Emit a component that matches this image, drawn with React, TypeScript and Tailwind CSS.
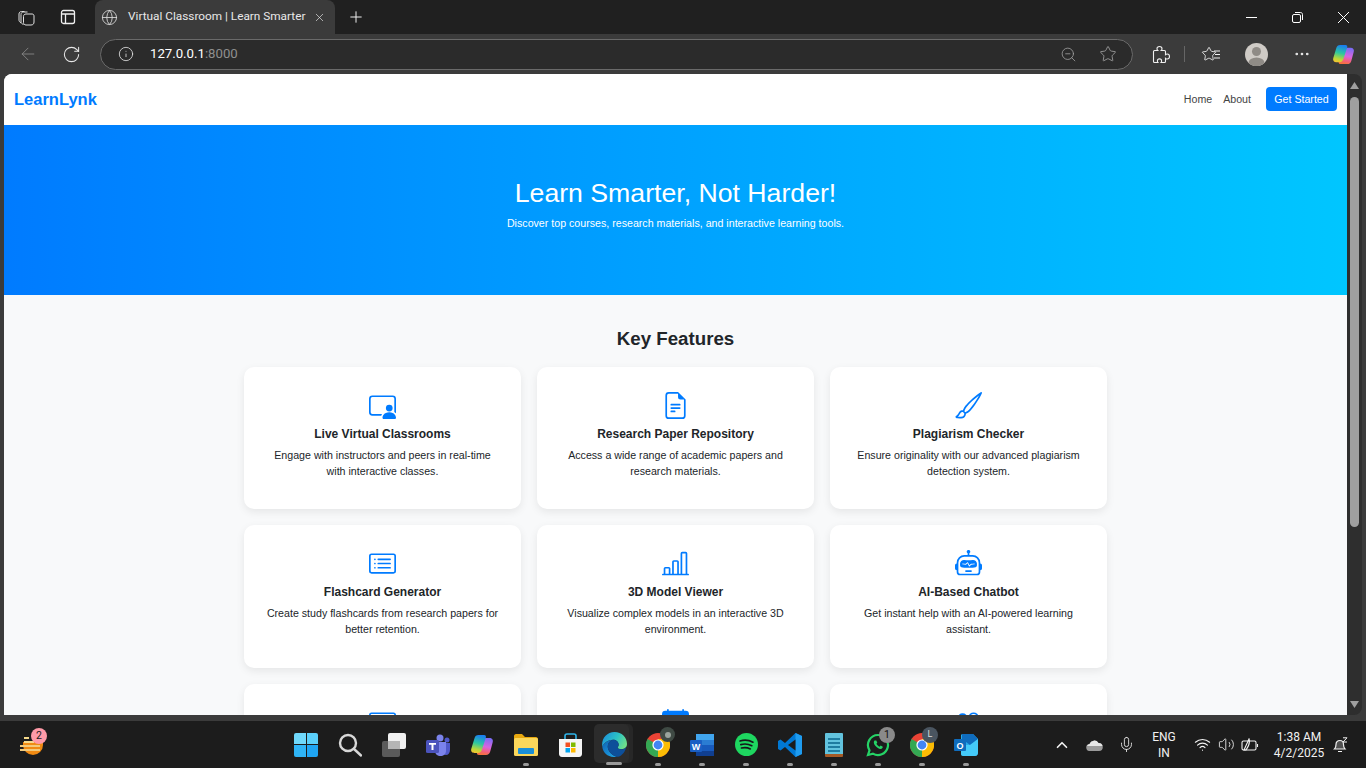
import type { ReactNode } from 'react';
import {
  BsPersonVideo3,
  BsFileEarmarkText,
  BsBrush,
  BsCardList,
  BsBarChartLine,
  BsRobot,
  BsCardText,
  BsCalendarEventFill,
  BsPeople,
} from 'react-icons/bs';
import {
  ArrowLeft,
  RotateCw,
  Info,
  ZoomOut,
  Star,
  MoreHorizontal,
  Plus,
  X,
  Globe,
  ChevronUp,
  Mic,
  Wifi,
  Volume2,
} from 'lucide-react';

const FONT = "font-['Liberation_Sans',Arial,sans-serif]";

const features = [
  { icon: BsPersonVideo3, title: 'Live Virtual Classrooms', text: 'Engage with instructors and peers in real-time with interactive classes.' },
  { icon: BsFileEarmarkText, title: 'Research Paper Repository', text: 'Access a wide range of academic papers and research materials.' },
  { icon: BsBrush, title: 'Plagiarism Checker', text: 'Ensure originality with our advanced plagiarism detection system.' },
  { icon: BsCardList, title: 'Flashcard Generator', text: 'Create study flashcards from research papers for better retention.' },
  { icon: BsBarChartLine, title: '3D Model Viewer', text: 'Visualize complex models in an interactive 3D environment.' },
  { icon: BsRobot, title: 'AI-Based Chatbot', text: 'Get instant help with an AI-powered learning assistant.' },
  { icon: BsCardText, title: '', text: '' },
  { icon: BsCalendarEventFill, title: '', text: '' },
  { icon: BsPeople, title: '', text: '' },
];

function CopilotLogo({ size = 24, id }: { size?: number; id: string }) {
  return (
    <svg width={size} height={size} viewBox="0 0 24 24">
      <defs>
        <linearGradient id={`${id}A`} x1="0.5" y1="0" x2="0.3" y2="1">
          <stop offset="0" stopColor="#1a7ff0" />
          <stop offset="0.45" stopColor="#2cc7a0" />
          <stop offset="0.8" stopColor="#b8d83a" />
          <stop offset="1" stopColor="#f7c52e" />
        </linearGradient>
        <linearGradient id={`${id}B`} x1="0.6" y1="0" x2="0.4" y2="1">
          <stop offset="0" stopColor="#7b6cf5" />
          <stop offset="0.5" stopColor="#d765e0" />
          <stop offset="0.8" stopColor="#f4607a" />
          <stop offset="1" stopColor="#f5733a" />
        </linearGradient>
      </defs>
      <path d="M15 5h4.500c2.500 0 3.900 1.800 3.200 4.200l-2.500 9.300c-.6 2.200-2 3.500-4.200 3.500H9c-1.800 0-2.400-1.200-1.900-2.700L11.300 8c.6-2 1.800-3 3.700-3z" fill={`url(#${id}B)`} />
      <path d="M8.500 2H14c1.700 0 2.300 1.200 1.800 2.800L12 16.500c-.7 2.300-2 3.500-4 3.500H4.500C2 20 .6 18.200 1.300 15.800L4.500 5.200C5.100 3.100 6.400 2 8.500 2z" fill={`url(#${id}A)`} />
    </svg>
  );
}

function ChromeLogo() {
  return (
    <svg width="24" height="24" viewBox="0 0 24 24">
      <circle cx="12" cy="12" r="12" fill="#ea4335" />
      <path d="M12 12 1.600 6A12 12 0 0 0 12 24l5.200-9z" fill="#34a853" />
      <path d="M12 12 12 24A12 12 0 0 0 22.400 6H12z" fill="#fbbc04" />
      <circle cx="12" cy="12" r="5.600" fill="#fff" />
      <circle cx="12" cy="12" r="4.400" fill="#4285f4" />
    </svg>
  );
}

function EdgeLogo() {
  return (
    <svg width="25" height="25" viewBox="0 0 24 24">
      <defs>
        <linearGradient id="edA" x1="0" y1="0.2" x2="1" y2="0.6">
          <stop offset="0" stopColor="#1c8fdc" />
          <stop offset="0.55" stopColor="#2bc3c4" />
          <stop offset="1" stopColor="#6fe08a" />
        </linearGradient>
        <linearGradient id="edB" x1="0" y1="0" x2="0.7" y2="1">
          <stop offset="0" stopColor="#0f5fb0" />
          <stop offset="1" stopColor="#1b9de2" />
        </linearGradient>
      </defs>
      <path d="M12 0c7 0 12 5 12 11.500 0 3-2.200 5-5.500 5-2 0-3.500-.6-3.500-1.600 0-.7 1-1 1-2.700C16 9.500 13.500 7.500 10.500 7.500 6 7.500 2 10.500.2 14 -.8 6.500 4.500 0 12 0z" fill="url(#edA)" />
      <path d="M.2 14C2 10.500 6 7.500 10.500 7.500c-3 1-5 3.500-5 6.500 0 4 3.300 8 8.500 9.800C7 25 1 21 .2 14z" fill="url(#edB)" />
      <path d="M10.500 7.500c3 0 5.500 2 5.500 4.700 0 1.700-1 2-1 2.700 0 1 1.500 1.600 3.500 1.600 2.100 0 3.800-.8 4.800-2.200C22 20 18 24 14 23.800 8.800 22 5.500 18 5.500 14c0-3 2-5.500 5-6.500z" fill="#0d4f9a" />
    </svg>
  );
}

function TaskIcon({ dot, children }: { dot?: boolean; children: ReactNode }) {
  return (
    <div className="relative flex h-[47px] w-[44px] shrink-0 items-center justify-center">
      {children}
      {dot && <span className="absolute bottom-[2px] left-1/2 h-[3px] w-[6px] -translate-x-1/2 rounded-full bg-[#9a9a9a]" />}
    </div>
  );
}

function BrowserChrome() {
  return (
    <>
      {/* tab strip */}
      <div className="flex h-[34px] shrink-0 items-center bg-[#202020] text-[#e8e8e8]">
        <div className="flex w-[95px] shrink-0 items-center pl-[18px]">
          <svg width="17" height="17" viewBox="0 0 17 17" fill="none" stroke="#e0e0e0" strokeWidth="1">
            <path d="M1 5c0-1.500 1-2.500 2.500-2.500h3M3 8V5.500C3 4 4 3 5.500 3h4M5.500 7.500C5.500 6 6.500 5 8 5h6c1.300 0 2 .8 2 2v6c0 1.800-1 3-3 3H8c-1.500 0-2.500-1-2.500-2.500z" />
            <path d="M1 5v6c0 1 .5 2 2 3M3 8v5c0 1 1 2 2.500 2.500" />
          </svg>
          <svg className="ml-[25px]" width="16" height="16" viewBox="0 0 16 16" fill="none" stroke="#f0f0f0" strokeWidth="1.300">
            <rect x="1.500" y="1.500" width="13" height="13" rx="2" />
            <path d="M1.500 5h13M5.500 5v9.500" />
          </svg>
        </div>
        <div className="flex h-[34px] w-[240px] shrink-0 items-center rounded-t-[8px] bg-[#3b3b3b] pl-[6px]">
          <Globe size={17} strokeWidth={1.200} className="shrink-0 text-[#dcdcdc]" />
          <span className="ml-[10px] flex-1 whitespace-nowrap font-['Roboto',sans-serif] text-[11.800px] text-[#e8e8e8]">
            Virtual Classroom | Learn Smarter
          </span>
          <X size={13} strokeWidth={1.300} className="mr-[9px] shrink-0 text-[#e0e0e0]" />
        </div>
        <Plus size={18} strokeWidth={1.300} className="ml-[12px] text-[#f4f4f4]" />
        <div className="ml-auto flex items-center text-white">
          <div className="flex w-[46px] justify-center">
            <svg width="11" height="11" viewBox="0 0 11 11" stroke="currentColor" strokeWidth="1" shapeRendering="crispEdges">
              <path d="M0 5.500h11" />
            </svg>
          </div>
          <div className="flex w-[46px] justify-center">
            <svg width="11" height="11" viewBox="0 0 11 11" fill="none" stroke="currentColor" strokeWidth="1">
              <rect x="0.500" y="2.500" width="8" height="8" rx="1.500" />
              <path d="M3 .5h5.500c1.200 0 2 .8 2 2V8" />
            </svg>
          </div>
          <div className="flex w-[46px] justify-center">
            <svg width="11" height="11" viewBox="0 0 11 11" stroke="currentColor" strokeWidth="1">
              <path d="m0 0 11 11M11 0 0 11" />
            </svg>
          </div>
        </div>
      </div>
      {/* toolbar */}
      <div className="flex h-[40px] shrink-0 items-center bg-[#3b3b3b] text-[#e8e8e8]">
        <ArrowLeft size={20} strokeWidth={1} className="ml-[18px] text-[#8c8c8c]" />
        <RotateCw size={19} strokeWidth={1.300} className="ml-[24px]" />
        <div className="ml-[19px] flex h-[31px] w-[1033px] items-center rounded-full border border-[#6a6a6a] bg-[#2b2b2b]">
          <Info size={16} strokeWidth={1.200} className="ml-[17px]" />
          <span className="ml-[16px] font-['Roboto',sans-serif] text-[13.200px]">
            <span className="text-white">127.0.0.1</span>
            <span className="text-[#8f8f8f]">:8000</span>
          </span>
          <ZoomOut size={17} strokeWidth={1.100} className="ml-auto text-[#a5a5a5]" />
          <Star size={18} strokeWidth={1.100} className="ml-[22px] mr-[15px] text-[#a5a5a5]" />
        </div>
        <svg className="ml-[18px]" width="19" height="19" viewBox="0 0 19 19" fill="none" stroke="#f0f0f0" strokeWidth="1.100">
          <path d="M3.500 5.500h3.200c-.5-.5-.7-1.200-.7-1.800C6 2.300 7.200 1.500 8.500 1.500S11 2.300 11 3.700c0 .6-.2 1.300-.7 1.800h3.200c.6 0 1 .4 1 1v3.200c.5-.5 1.200-.7 1.800-.7 1.400 0 2.200 1.200 2.200 2.500s-.8 2.500-2.200 2.500c-.6 0-1.300-.2-1.800-.7v3.200c0 .6-.4 1-1 1H10c.4-.5.6-1 .6-1.600 0-1.200-1-2-2.100-2s-2.100.8-2.100 2c0 .6.2 1.100.6 1.600H3.500c-.6 0-1-.4-1-1V6.500c0-.6.4-1 1-1z" />
        </svg>
        <span className="ml-[14px] h-[16px] w-px bg-[#666]" />
        <div className="relative ml-[16px] flex h-[18px] w-[18px] items-center">
          <Star size={16} strokeWidth={1.300} className="text-[#f0f0f0]" />
          <svg className="absolute left-[12px] top-[5px]" width="7" height="9" viewBox="0 0 7 9" stroke="#f0f0f0" strokeWidth="1">
            <path d="M1 1h6M2 4.500h5M1 8h6" />
          </svg>
        </div>
        <div className="ml-[26px] flex h-[23px] w-[23px] items-start justify-center overflow-hidden rounded-full bg-[#cfcbc6]">
          <svg width="23" height="23" viewBox="0 0 23 23">
            <circle cx="11.500" cy="8.500" r="4.500" fill="#8f8b86" />
            <ellipse cx="11.500" cy="20" rx="8" ry="5.500" fill="#8f8b86" />
          </svg>
        </div>
        <MoreHorizontal size={18} strokeWidth={1.600} className="ml-[25px]" />
        <div className="ml-[21px]">
          <CopilotLogo size={23} id="cpTop" />
        </div>
      </div>
    </>
  );
}

function Page() {
  return (
    <div className={`h-full overflow-hidden rounded-tl-[8px] bg-[#f8f9fa] ${FONT}`}>
      <nav className="flex h-[51px] items-center justify-between bg-white px-[10px] pb-[1px]">
        <span className="text-[16.500px] font-bold text-[#007bff]">LearnLynk</span>
        <div className="flex items-center text-[10.650px] text-[#444]">
          <span className="pt-px">Home</span>
          <span className="ml-[11px] pt-px">About</span>
          <span className="ml-[15px] flex h-[24px] w-[71px] items-center justify-center rounded-[4px] bg-[#007bff] pt-px text-white">
            Get Started
          </span>
        </div>
      </nav>
      <section className="flex h-[170px] flex-col items-center bg-gradient-to-r from-[#007bff] to-[#00c6ff] pt-[52px] text-white">
        <h1 className="text-[26.670px] leading-[32px]">Learn Smarter, Not Harder!</h1>
        <p className="mt-[6px] text-[10.650px] leading-[16px]">
          Discover top courses, research materials, and interactive learning tools.
        </p>
      </section>
      <section className="flex flex-col items-center pt-[32px]">
        <h2 className="text-[18.700px] font-bold leading-[24px] text-[#212529]">Key Features</h2>
        <div className="mt-[16px] grid w-[863px] grid-cols-3 grid-rows-[142px_143px_142px] gap-[16px]">
          {features.map(({ icon: Icon, title, text }, i) => (
            <div
              key={i}
              className="flex flex-col items-center rounded-[10px] bg-white px-[20px] pt-[25px] text-center shadow-[0_3px_8px_rgba(0,0,0,0.08)]"
            >
              <Icon size={27} className="shrink-0 text-[#007bff]" />
              <h3 className="mt-[7px] text-[12px] font-bold leading-[16px] text-[#212529]">{title}</h3>
              <p className="mt-[5px] text-[10.650px] leading-[16px] text-[#212529]">{text}</p>
            </div>
          ))}
        </div>
      </section>
    </div>
  );
}

function Scrollbar() {
  return (
    <div className="flex w-[15px] shrink-0 flex-col items-center rounded-r-[8px] bg-[#2e2e2e]">
      <svg className="mt-[8px]" width="9" height="7" viewBox="0 0 9 7">
        <path d="M4.500 0 9 7H0z" fill="#9f9f9f" />
      </svg>
      <div className="mt-[8px] h-[430px] w-[9px] rounded-full bg-[#9f9f9f]" />
      <svg className="mb-[7px] mt-auto" width="9" height="7" viewBox="0 0 9 7">
        <path d="M0 0h9L4.500 7z" fill="#9f9f9f" />
      </svg>
    </div>
  );
}

function Taskbar() {
  return (
    <div className="flex h-[47px] shrink-0 items-center bg-[#1c1c1c] font-['Roboto',sans-serif] text-[#f2f2f2]">
      {/* widgets */}
      <div className="relative ml-[20px] h-[47px] w-[30px] shrink-0">
        <div className="absolute left-[3px] top-[21px] h-[13px] w-[20px] rounded-b-full bg-[#f08a12]" />
        <div className="absolute left-[4px] top-[16px] h-[2px] w-[5px] bg-[#f5d98a]" />
        <div className="absolute left-[4px] top-[20px] h-[2px] w-[10px] bg-[#f5d98a]" />
        <div className="absolute left-0 top-[24px] h-[2px] w-[20px] bg-[#f2c97a]" />
        <div className="absolute left-0 top-[28px] h-[2px] w-[20px] bg-[#f2c97a]" />
        <span className="absolute left-[11px] top-[7px] flex h-[16px] w-[16px] items-center justify-center rounded-full bg-[#ff9aa8] text-[10.500px] text-[#222]">
          2
        </span>
      </div>
      {/* pinned apps */}
      <div className="ml-[234px] flex items-center">
        <TaskIcon>
          <div className="grid h-[24px] w-[24px] grid-cols-2 gap-[1px]">
            <span className="rounded-tl-[2px] bg-[#6fd8fb]" />
            <span className="rounded-tr-[2px] bg-[#5ad0fb]" />
            <span className="rounded-bl-[2px] bg-[#2fb4f6]" />
            <span className="rounded-br-[2px] bg-[#1fa5f3]" />
          </div>
        </TaskIcon>
        <TaskIcon>
          <svg width="24" height="24" viewBox="0 0 24 24" fill="none" stroke="#d8d8d8" strokeWidth="2.400">
            <circle cx="10" cy="10" r="8" />
            <path d="m16 16 7 6.500" strokeLinecap="round" />
          </svg>
        </TaskIcon>
        <TaskIcon>
          <div className="relative h-[24px] w-[24px]">
            <span className="absolute bottom-0 left-0 h-[16px] w-[18px] rounded-[2px] bg-[#5a5a5a]" />
            <span className="absolute right-0 top-0 h-[16px] w-[18px] rounded-[2px] bg-[#f0f0f0]" />
            <span className="absolute left-[6px] top-[8px] h-[8px] w-[12px] bg-[#b5b5b5]" />
          </div>
        </TaskIcon>
        <TaskIcon>
          <svg width="25" height="24" viewBox="0 0 25 24">
            <circle cx="14" cy="5" r="3.500" fill="#7b83eb" />
            <circle cx="21" cy="7" r="2.500" fill="#5059c9" />
            <path d="M16 10h8v7c0 3-2 5-4 5s-4-2-4-5z" fill="#5059c9" />
            <path d="M9 9h11v9c0 3-2.500 5-5.500 5S9 21 9 18z" fill="#7b83eb" />
            <rect x="0" y="7" width="13" height="13" rx="1.500" fill="#4b53bc" />
            <path d="M3 10h7v1.800H7.500V17h-2v-5.200H3z" fill="#fff" />
          </svg>
        </TaskIcon>
        <TaskIcon>
          <CopilotLogo id="cpBar" />
        </TaskIcon>
        <TaskIcon dot>
          <svg width="24" height="22" viewBox="0 0 24 22">
            <path d="M0 2c0-1 .8-2 2-2h6l3 3h11c1 0 2 1 2 2v2H0z" fill="#e8a80f" />
            <rect y="4" width="24" height="18" rx="1.500" fill="#fbd75b" />
            <rect x="4" y="14" width="16" height="6" rx="1" fill="#1a8fd8" />
          </svg>
        </TaskIcon>
        <TaskIcon>
          <svg width="23" height="24" viewBox="0 0 23 24">
            <path d="M6 6V3c0-1.500 1-2 2-2h7c1 0 2 .5 2 2v3" fill="none" stroke="#2fb4e9" strokeWidth="1.600" />
            <path d="M0 6h23v15c0 1.500-1 3-3 3H3c-2 0-3-1.500-3-3z" fill="#f5f5f5" />
            <rect x="6.500" y="9.500" width="4.500" height="4.500" fill="#f25022" />
            <rect x="12" y="9.500" width="4.500" height="4.500" fill="#7fba00" />
            <rect x="6.500" y="15" width="4.500" height="4.500" fill="#00a4ef" />
            <rect x="12" y="15" width="4.500" height="4.500" fill="#ffb900" />
          </svg>
        </TaskIcon>
        <TaskIcon>
          <span className="absolute left-[33px] top-[3px] h-[39px] w-[8px] rounded-r-[5px] bg-[#272727]" />
          <span className="absolute left-[2px] top-[3px] h-[39px] w-[35px] rounded-[5px] bg-[#2c2c2c]" />
          <div className="relative">
            <EdgeLogo />
          </div>
          <span className="absolute bottom-[3px] left-1/2 h-[3px] w-[16px] -translate-x-1/2 rounded-full bg-[#9a9a9a]" />
        </TaskIcon>
        <TaskIcon dot>
          <ChromeLogo />
          <span className="absolute right-[5px] top-[6px] flex h-[15px] w-[15px] items-center justify-center rounded-full bg-[#3f4a44]">
            <span className="h-[6px] w-[6px] rounded-full bg-[#9aa39c]" />
          </span>
        </TaskIcon>
        <TaskIcon dot>
          <svg width="24" height="22" viewBox="0 0 24 22">
            <rect x="6" y="0" width="18" height="22" rx="1.500" fill="#2b7cd3" />
            <rect x="6" y="0" width="18" height="6" fill="#41a5ee" />
            <rect x="6" y="11" width="18" height="6" fill="#185abd" />
            <rect x="6" y="17" width="18" height="5" fill="#103f91" />
            <rect x="0" y="6" width="12" height="12" rx="1" fill="#1a5fc4" />
            <text x="6" y="15.500" textAnchor="middle" fontSize="9" fontWeight="700" fill="#fff" fontFamily="Liberation Sans">W</text>
          </svg>
        </TaskIcon>
        <TaskIcon dot>
          <svg width="23" height="23" viewBox="0 0 23 23">
            <circle cx="11.500" cy="11.500" r="11.500" fill="#1ed760" />
            <path d="M5 8c4-1.200 9-.9 13 1.200M5.800 11.600c3.500-1 7.500-.7 11 1.100M6.500 15c3-.8 6-.6 8.800.9" fill="none" stroke="#16181a" strokeWidth="1.700" strokeLinecap="round" />
          </svg>
        </TaskIcon>
        <TaskIcon dot>
          <svg width="24" height="24" viewBox="0 0 24 24">
            <path d="M17.500 0 24 3v18l-6.500 3L7 14l-4.500 3.500L0 16v-8l2.500-1.500L7 10z" fill="#0078d4" />
            <path d="M17.500 0 24 3v18l-6.500 3z" fill="#1f9cf0" />
            <path d="M17.500 6.500 10 12l7.500 5.500z" fill="#1c1c1c" />
          </svg>
        </TaskIcon>
        <TaskIcon dot>
          <div className="flex h-[24px] w-[18px] flex-col gap-[2px] overflow-hidden rounded-[1px] border-b-[3px] border-[#a55a26] bg-[#62c3de] px-[3px] pt-[5px]">
            <span className="h-[2px] bg-[#1f7ca0]" />
            <span className="h-[2px] bg-[#1f7ca0]" />
            <span className="h-[2px] bg-[#1f7ca0]" />
            <span className="h-[2px] bg-[#1f7ca0]" />
          </div>
        </TaskIcon>
        <TaskIcon dot>
          <svg width="24" height="24" viewBox="0 0 24 24">
            <path d="M12 2a10 10 0 0 0-8.500 15.300L2 22l4.900-1.400A10 10 0 1 0 12 2z" fill="none" stroke="#25d366" strokeWidth="2.200" />
            <path d="M8.500 7.500c-1 1-1 3 .8 5.300 2 2.500 4.500 3.700 6.200 3 1-.4 1.300-1.300 1.300-2l-2.200-1.200-1 1.100c-1.200-.5-2.500-1.700-3.200-3l.9-1-1-2.300z" fill="#25d366" />
          </svg>
          <span className="absolute right-[5px] top-[6px] flex h-[16px] w-[16px] items-center justify-center rounded-full bg-[#8a8a8a] text-[10.500px] text-[#111]">
            1
          </span>
        </TaskIcon>
        <TaskIcon dot>
          <ChromeLogo />
          <span className="absolute right-[6px] top-[6px] flex h-[16px] w-[16px] items-center justify-center rounded-full bg-[#4a5560] text-[9px] text-[#ddd]">
            L
          </span>
        </TaskIcon>
        <TaskIcon dot>
          <svg width="24" height="22" viewBox="0 0 24 22">
            <path d="M8 0h11l5 5v14c0 1.500-1 3-3 3H9c-1 0-2-1-2-2V1z" fill="#28a8ea" />
            <path d="M8 0h11l5 5-8 6-8-6z" fill="#0f6cbd" />
            <path d="M7 11l9 0 8-6v14c0 1.500-1 3-3 3H9c-1 0-2-1-2-2z" fill="#50d9ff" opacity="0.7" />
            <rect x="0" y="5" width="12" height="12" rx="1" fill="#0f6cbd" />
            <text x="6" y="14.500" textAnchor="middle" fontSize="9" fontWeight="700" fill="#fff" fontFamily="Liberation Sans">O</text>
          </svg>
        </TaskIcon>
      </div>
      {/* tray */}
      <div className="ml-auto flex items-center">
        <ChevronUp size={18} strokeWidth={2.200} />
        <svg className="ml-[14.500px]" width="17" height="12" viewBox="0 0 17 12">
          <path d="M4 12a3.500 3.500 0 0 1-.5-7A5 5 0 0 1 12.500 4 4 4 0 0 1 13 12z" fill="#9a9a9a" />
          <path d="M1 7a3.500 3.500 0 0 1 2.500-2A5 5 0 0 1 12.500 4 4 4 0 0 1 16.500 7z" fill="#e6e6e6" />
        </svg>
        <Mic size={17} strokeWidth={1.200} className="ml-[15px]" />
        <div className="ml-[15.500px] flex w-[28px] flex-col items-center text-[12px] leading-[16px]">
          <span>ENG</span>
          <span>IN</span>
        </div>
        <Wifi size={17} strokeWidth={1.600} className="ml-[15.500px]" />
        <Volume2 size={17} strokeWidth={1.200} className="ml-[7px]" />
        <svg className="ml-[6.500px]" width="18" height="14" viewBox="0 0 18 14" fill="none" stroke="#f2f2f2" strokeWidth="1.100">
          <rect x="1" y="3" width="14" height="9" rx="1.500" />
          <path d="M16.500 6v3M3 12 8 1c1 3 0 7-3 11z" />
        </svg>
        <div className="ml-[11px] flex w-[58px] flex-col items-center whitespace-nowrap text-[12px] leading-[16px]">
          <span>1:38 AM</span>
          <span>4/2/2025</span>
        </div>
        <svg className="ml-[5px] mr-[18px]" width="15" height="16" viewBox="0 0 15 16" fill="none" stroke="#f2f2f2" strokeWidth="1.200">
          <path d="M1.500 12c1-1 1.500-2 1.500-4.500S4.500 3.500 7 3.500 10.500 5 10.500 7.500s.5 3.500 1.500 4.500z" fill="#f2f2f2" fillOpacity="0.25" />
          <path d="M5 14.500h4M10 .8h4L10 5h4" strokeWidth="1" />
        </svg>
      </div>
    </div>
  );
}

export default function App() {
  return (
    <div className="flex h-screen w-full flex-col overflow-hidden bg-[#3b3b3b]">
      <BrowserChrome />
      <div className="flex min-h-0 flex-1 px-[4px] pb-[6px]">
        <div className="min-w-0 flex-1">
          <Page />
        </div>
        <Scrollbar />
      </div>
      <Taskbar />
    </div>
  );
}
